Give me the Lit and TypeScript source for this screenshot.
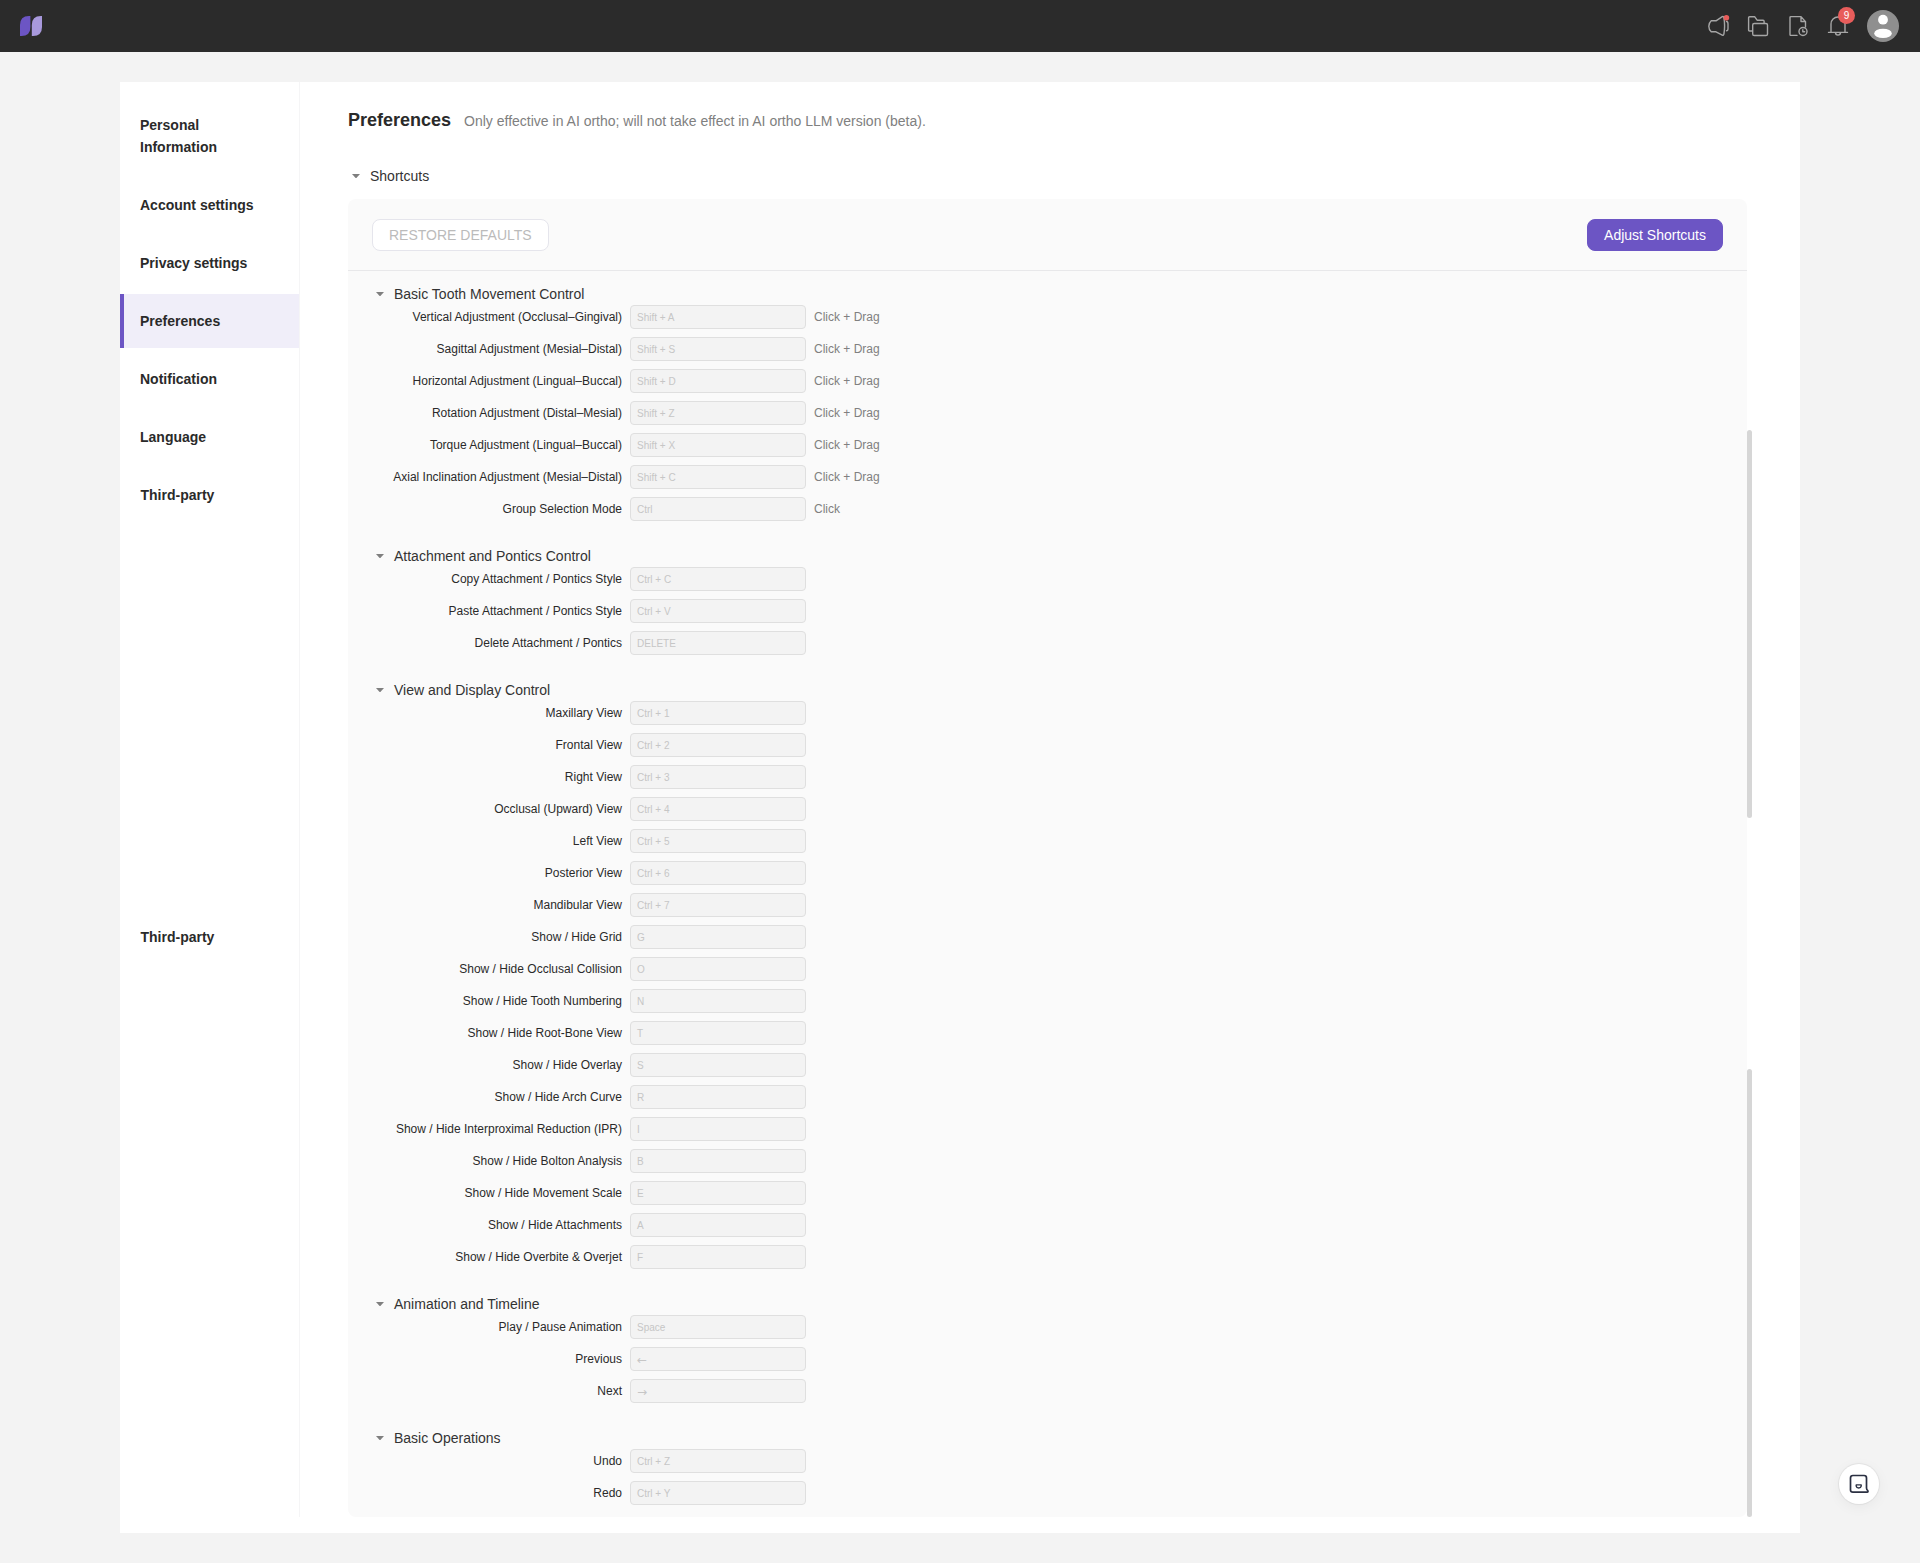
import { LitElement, html, css, svg, nothing } from "lit";
import { customElement, property } from "lit/decorators.js";
import { classMap } from "lit/directives/class-map.js";

type Shortcut = { label: string; keys: string; hint?: string };
type Group = { title: string; rows: Shortcut[] };

const row = (label: string, keys: string, hint?: string): Shortcut => ({ label, keys, hint });

const GROUPS: Group[] = [
  {
    title: "Basic Tooth Movement Control",
    rows: [
      row("Vertical Adjustment (Occlusal–Gingival)", "Shift + A", "Click + Drag"),
      row("Sagittal Adjustment (Mesial–Distal)", "Shift + S", "Click + Drag"),
      row("Horizontal Adjustment (Lingual–Buccal)", "Shift + D", "Click + Drag"),
      row("Rotation Adjustment (Distal–Mesial)", "Shift + Z", "Click + Drag"),
      row("Torque Adjustment (Lingual–Buccal)", "Shift + X", "Click + Drag"),
      row("Axial Inclination Adjustment (Mesial–Distal)", "Shift + C", "Click + Drag"),
      row("Group Selection Mode", "Ctrl", "Click"),
    ],
  },
  {
    title: "Attachment and Pontics Control",
    rows: [
      row("Copy Attachment / Pontics Style", "Ctrl + C"),
      row("Paste Attachment / Pontics Style", "Ctrl + V"),
      row("Delete Attachment / Pontics", "DELETE"),
    ],
  },
  {
    title: "View and Display Control",
    rows: [
      row("Maxillary View", "Ctrl + 1"),
      row("Frontal View", "Ctrl + 2"),
      row("Right View", "Ctrl + 3"),
      row("Occlusal (Upward) View", "Ctrl + 4"),
      row("Left View", "Ctrl + 5"),
      row("Posterior View", "Ctrl + 6"),
      row("Mandibular View", "Ctrl + 7"),
      row("Show / Hide Grid", "G"),
      row("Show / Hide Occlusal Collision", "O"),
      row("Show / Hide Tooth Numbering", "N"),
      row("Show / Hide Root-Bone View", "T"),
      row("Show / Hide Overlay", "S"),
      row("Show / Hide Arch Curve", "R"),
      row("Show / Hide Interproximal Reduction (IPR)", "I"),
      row("Show / Hide Bolton Analysis", "B"),
      row("Show / Hide Movement Scale", "E"),
      row("Show / Hide Attachments", "A"),
      row("Show / Hide Overbite & Overjet", "F"),
    ],
  },
  {
    title: "Animation and Timeline",
    rows: [
      row("Play / Pause Animation", "Space"),
      row("Previous", "←"),
      row("Next", "→"),
    ],
  },
  {
    title: "Basic Operations",
    rows: [row("Undo", "Ctrl + Z"), row("Redo", "Ctrl + Y")],
  },
];

const caret = html`<svg width="8" height="6" viewBox="0 0 8 6">
  <path d="M0 1h8L4.600 4.800q-.6.600-1.200 0z" fill="#7f7f7f" />
</svg>`;

@customElement("top-bar")
class TopBar extends LitElement {
  static styles = css`
    :host {
      display: flex;
      align-items: center;
      justify-content: space-between;
      height: 52px;
      box-sizing: border-box;
      padding: 0 21px 0 20px;
      background: #2b2b2b;
    }
    svg {
      display: block;
    }
    .tools {
      display: flex;
      align-items: center;
      gap: 16px;
    }
    .tool {
      position: relative;
      width: 24px;
      height: 24px;
    }
    .badge {
      position: absolute;
      left: 12px;
      top: -7px;
      width: 17px;
      height: 17px;
      border-radius: 9px;
      background: #e85d5b;
      color: #fff;
      font-size: 10px;
      line-height: 17px;
      text-align: center;
    }
    .avatar {
      margin-left: 1px;
    }
  `;

  private icon(body: unknown) {
    return html`<svg
      width="24"
      height="24"
      viewBox="0 0 24 24"
      fill="none"
      stroke="#a6a6a6"
      stroke-width="1.4"
      stroke-linejoin="round"
      stroke-linecap="round"
    >
      ${body}
    </svg>`;
  }

  render() {
    return html`
      <svg width="22" height="20" viewBox="0 0 22 20">
        <path d="M0 20V9Q0 0 9 0h1.400v11q0 9-9 9z" fill="#6c55c4" />
        <path d="M11.800 20V9q0-9 9-9H22v11q0 9-9 9z" fill="#a899dc" />
      </svg>
      <div class="tools">
        <div class="tool">
          ${this.icon(svg`
            <path d="M16.300 2.700 10 6.800H5.200Q2.800 9 2.800 12.300t2.400 5.500H10l6.300 3.300q1.200.5 1.600-1Q18.600 16 18.600 12t-.7-8.300q-.4-1.500-1.600-1z" />
            <path d="M20.500 7.500q1.500 0 1.500 2.500v4.500q0 2.300-1.500 2.300" />
            <circle cx="20.400" cy="3.700" r="2.800" fill="#e85d5b" stroke="none" />
          `)}
        </div>
        <div class="tool">
          ${this.icon(svg`
            <path d="M6 17H3.600q-1 0-1-1V3.700q0-1 1-1h5l2.500 3.500h6q1 0 1 1v2" />
            <rect x="6.700" y="9.500" width="14.800" height="12" rx="1.600" />
          `)}
        </div>
        <div class="tool">
          ${this.icon(svg`
            <path d="M11 21.400H5q-1 0-1-1V3.600q0-1 1-1h10l4.500 5V13M15 2.800V7.500h4.500" />
            <circle cx="17" cy="17.500" r="4" />
            <path d="M16.800 15.800v2h1.800" />
          `)}
        </div>
        <div class="tool">
          ${this.icon(svg`
            <path d="M5 18.200V10a7 7 0 0 1 14 0v8.200M2.500 18.400h19M9.500 18.600a2.500 2.500 0 0 0 5 0" />
          `)}
          <span class="badge">9</span>
        </div>
        <svg class="avatar" width="32" height="32" viewBox="0 0 32 32">
          <circle cx="16" cy="16" r="16" fill="#8f8f8f" />
          <circle cx="16" cy="9.700" r="4.900" fill="#fff" />
          <ellipse cx="16" cy="23.400" rx="8.800" ry="4.700" fill="#fff" />
        </svg>
      </div>
    `;
  }
}

@customElement("side-nav")
class SideNav extends LitElement {
  static styles = css`
    :host {
      display: flex;
      flex-direction: column;
      gap: 4px;
      width: 180px;
      flex: none;
      box-sizing: border-box;
      padding-top: 16px;
      border-right: 1px solid #f5f5f6;
    }
    .item {
      padding: 16px 40px 16px 16px;
      border-left: 4px solid transparent;
      font-size: 14px;
      font-weight: 700;
      line-height: 22px;
      color: #2a2a2a;
    }
    .wide {
      padding-right: 10px;
    }
    .active {
      background: #f0eef9;
      border-left-color: #6c55c4;
    }
    .indent {
      padding-left: 16.500px;
    }
    .late {
      margin-top: 384px;
    }
  `;

  render() {
    return html`
      <div class="item">Personal Information</div>
      <div class="item wide">Account settings</div>
      <div class="item wide">Privacy settings</div>
      <div class="item active">Preferences</div>
      <div class="item">Notification</div>
      <div class="item">Language</div>
      <div class="item indent">Third-party</div>
      <div class="item indent late">Third-party</div>
    `;
  }
}

@customElement("shortcut-group")
class ShortcutGroup extends LitElement {
  @property({ attribute: false }) group!: Group;

  static styles = css`
    :host {
      display: block;
    }
    .head {
      display: flex;
      align-items: center;
      gap: 10px;
      height: 22px;
      padding-left: 28px;
      font-size: 14px;
      color: #333;
    }
    .row {
      display: flex;
      align-items: center;
      height: 24px;
      margin-bottom: 8px;
      font-size: 12px;
    }
    .label {
      width: 274px;
      margin-right: 8px;
      text-align: right;
      white-space: nowrap;
      color: #2a2a2a;
    }
    .keys {
      box-sizing: border-box;
      width: 176px;
      height: 24px;
      padding: 1px 6px 0;
      border: 1px solid #dfdfdf;
      border-radius: 4px;
      background: #f3f3f3;
      font-size: 10px;
      line-height: 22px;
      color: #c6c6c6;
    }
    .arrow {
      font-family: "DejaVu Sans", sans-serif;
      font-size: 12px;
    }
    .hint {
      margin-left: 8px;
      color: #808080;
    }
  `;

  render() {
    return html`
      <div class="head">${caret}<span>${this.group.title}</span></div>
      ${this.group.rows.map(
        (r) => html`<div class="row">
          <span class="label">${r.label}</span>
          <div class=${classMap({ keys: true, arrow: r.keys === "←" || r.keys === "→" })}>${r.keys}</div>
          ${r.hint ? html`<span class="hint">${r.hint}</span>` : nothing}
        </div>`
      )}
    `;
  }
}

@customElement("app-root")
class AppRoot extends LitElement {
  static styles = css`
    :host {
      display: block;
      position: relative;
      height: 1563px;
      overflow: hidden;
      background: #f3f3f3;
      font-family: "Liberation Sans", Arial, sans-serif;
    }
    .card {
      display: flex;
      box-sizing: border-box;
      width: 1680px;
      height: 1451px;
      margin: 30px auto 0;
      padding-bottom: 16px;
      background: #fff;
    }
    .main {
      flex: 1;
      min-width: 0;
      padding: 0 53px 0 48px;
      display: flex;
      flex-direction: column;
    }
    .title {
      display: flex;
      align-items: center;
      gap: 13px;
      height: 24px;
      margin-top: 26px;
    }
    .title h1 {
      margin: 0;
      font-size: 18px;
      line-height: 24px;
      color: #2a2a2a;
    }
    .note {
      padding-top: 2px;
      font-size: 14px;
      color: #808080;
    }
    .section {
      display: flex;
      align-items: center;
      gap: 10px;
      height: 22px;
      margin-top: 33px;
      padding-left: 4px;
      font-size: 14px;
      color: #333;
    }
    .panel {
      position: relative;
      flex: 1;
      margin-top: 12px;
      border-radius: 8px;
      background: #fafafa;
    }
    .actions {
      display: flex;
      justify-content: space-between;
      align-items: center;
      height: 72px;
      box-sizing: border-box;
      padding: 0 24px;
      border-bottom: 1px solid #e8e8ea;
    }
    .btn {
      box-sizing: border-box;
      height: 32px;
      padding: 0 16px;
      border: 1px solid #e5e5ec;
      border-radius: 8px;
      background: #fff;
      font-size: 14px;
      line-height: 30px;
      color: #bbb;
    }
    .primary {
      border-color: #6c55c4;
      background: #6c55c4;
      color: #fff;
    }
    .groups {
      display: flex;
      flex-direction: column;
      gap: 16px;
      padding-top: 12px;
    }
    .thumb {
      position: absolute;
      left: 100%;
      width: 5px;
      border-radius: 3px;
      background: #d6d6d6;
    }
    .inner {
      top: 231px;
      height: 388px;
    }
    .outer {
      top: 870px;
      bottom: 0;
    }
    .chat {
      position: absolute;
      left: 1839px;
      top: 1464px;
      display: flex;
      align-items: center;
      justify-content: center;
      box-sizing: border-box;
      padding: 0 1px 1px 0;
      width: 40px;
      height: 40px;
      border-radius: 50%;
      background: #fff;
      box-shadow: 0 0 1px 1px rgba(0, 0, 0, 0.06), 0 3px 14px rgba(0, 0, 0, 0.05);
    }
  `;

  render() {
    return html`
      <top-bar></top-bar>
      <div class="card">
        <side-nav></side-nav>
        <div class="main">
          <div class="title">
            <h1>Preferences</h1>
            <span class="note">Only effective in AI ortho; will not take effect in AI ortho LLM version (beta).</span>
          </div>
          <div class="section">${caret}<span>Shortcuts</span></div>
          <div class="panel">
            <div class="actions">
              <div class="btn">RESTORE DEFAULTS</div>
              <div class="btn primary">Adjust Shortcuts</div>
            </div>
            <div class="groups">
              ${GROUPS.map((g) => html`<shortcut-group .group=${g}></shortcut-group>`)}
            </div>
            <div class="thumb inner"></div>
            <div class="thumb outer"></div>
          </div>
        </div>
      </div>
      <div class="chat">
        <svg width="20" height="20" viewBox="0 0 20 20" fill="none" stroke="#2b3042" stroke-linejoin="round">
          <path d="M3.900 1.500h11.200q2.400 0 2.400 2.400v10q0 1.600 1.300 2.800.6 1.600-.8 1.500H3.800q-2.300 0-2.300-2.300V3.900q0-2.400 2.400-2.400z" stroke-width="1.700" />
          <path d="M7.200 10.900h5v1.200q-.3 1.900-2.500 1.900t-2.500-1.900z" stroke-width="1.400" />
        </svg>
      </div>
    `;
  }
}
